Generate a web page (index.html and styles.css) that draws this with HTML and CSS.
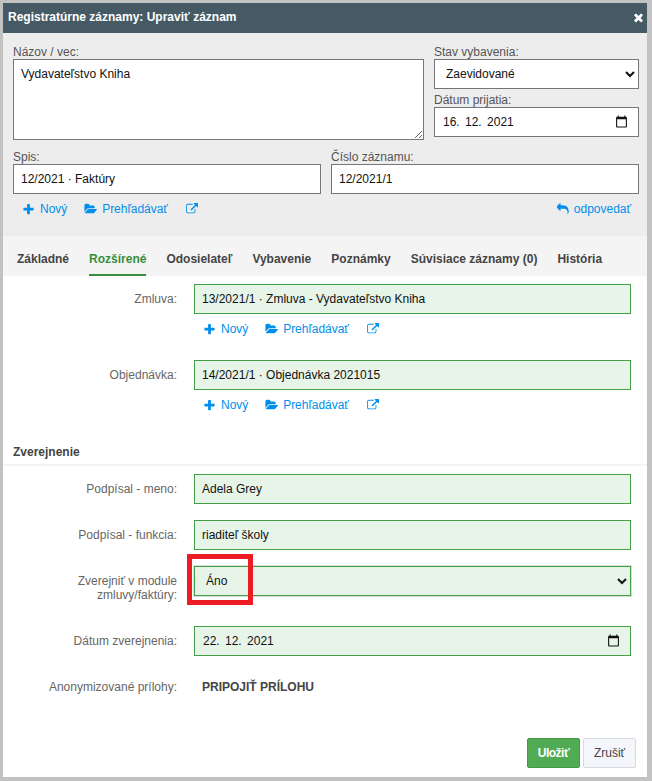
FILE: index.html
```
<!DOCTYPE html>
<html lang="sk">
<head>
<meta charset="utf-8">
<title>Upraviť záznam</title>
<link rel="stylesheet" href="styles.css">
</head>
<body>
<svg width="0" height="0" class="defs">
  <symbol id="times" viewBox="0 0 1792 1792"><path d="M1490 1322q0 40-28 68l-136 136q-28 28-68 28t-68-28l-294-294-294 294q-28 28-68 28t-68-28l-136-136q-28-28-28-68t28-68l294-294-294-294q-28-28-28-68t28-68l136-136q28-28 68-28t68 28l294 294 294-294q28-28 68-28t68 28l136 136q28 28 28 68t-28 68l-294 294 294 294q28 28 28 68z"/></symbol>
  <symbol id="plus" viewBox="192 0 1408 1792"><path d="M1600 736v192q0 40-28 68t-68 28h-416v416q0 40-28 68t-68 28h-192q-40 0-68-28t-28-68v-416h-416q-40 0-68-28t-28-68v-192q0-40 28-68t68-28h416v-416q0-40 28-68t68-28h192q40 0 68 28t28 68v416h416q40 0 68 28t28 68z"/></symbol>
  <symbol id="folder" viewBox="0 0 1943 1792"><path d="M1943 952q0 31-31 66l-336 396q-43 51-120.500 86.500t-143.500 35.500h-1088q-34 0-60.500-13t-26.500-43q0-31 31-66l336-396q43-51 120.500-86.500t143.500-35.500h1088q34 0 60.500 13t26.500 43zm-343-344v160h-832q-94 0-197 47.500t-164 119.500l-337 396-5 6q0-4-.5-12.500t-.5-12.500v-960q0-92 66-158t158-66h320q92 0 158 66t66 158v32h544q92 0 158 66t66 158z"/></symbol>
  <symbol id="external" viewBox="0 0 1792 1792"><path d="M1408 928v320q0 119-84.500 203.500t-203.500 84.500h-832q-119 0-203.500-84.500t-84.500-203.500v-832q0-119 84.500-203.500t203.500-84.500h704q14 0 23 9t9 23v64q0 14-9 23t-23 9h-704q-66 0-113 47t-47 113v832q0 66 47 113t113 47h832q66 0 113-47t47-113v-320q0-14 9-23t23-9h64q14 0 23 9t9 23zm384-864v512q0 26-19 45t-45 19-45-19l-176-176-652 652q-10 10-23 10t-23-10l-114-114q-10-10-10-23t10-23l652-652-176-176q-19-19-19-45t19-45 45-19h512q26 0 45 19t19 45z"/></symbol>
  <symbol id="reply" viewBox="0 0 1792 1792"><path d="M1792 1120q0 166-127 451-3 7-10.500 24t-13.500 30-13 22q-12 17-28 17-15 0-23.500-10t-8.500-25q0-9 2.500-26.500t2.500-23.500q5-68 5-123 0-112-19.500-200.500t-54-153.500-89-112-117.500-77.500-152-46-178-19-211-5.500h-224v256q0 26-19 45t-45 19-45-19l-512-512q-19-19-19-45t19-45l512-512q19-19 45-19t45 19 19 45v256h224q713 0 875 403 53 134 53 333z"/></symbol>
  <symbol id="calendar" viewBox="0 0 24 24"><path d="M20 3h-1V1h-2v2H7V1H5v2H4c-1.100 0-2 .9-2 2v16c0 1.100.9 2 2 2h16c1.100 0 2-.9 2-2V5c0-1.100-.9-2-2-2zm0 18H4V8h16v13z"/></symbol>
</svg>
<div class="dialog">
  <header class="titlebar"><span>Registratúrne záznamy: Upraviť záznam</span><svg class="close"><use href="#times"/></svg></header>
  <section class="summary">
    <div class="columns first">
      <label class="subject"><span>Názov / vec:</span><textarea>Vydavateľstvo Kniha</textarea></label>
      <div class="side">
        <label><span>Stav vybavenia:</span><select><option>Zaevidované</option></select></label>
        <label class="gap"><span>Dátum prijatia:</span><span class="field date"><span>16. 12. 2021</span><svg><use href="#calendar"/></svg></span></label>
      </div>
    </div>
    <div class="columns halves">
      <label><span>Spis:</span><input value="12/2021 · Faktúry"></label>
      <label><span>Číslo záznamu:</span><input value="12/2021/1"></label>
    </div>
    <div class="linkbar">
      <div class="links"><a><svg class="plus"><use href="#plus"/></svg>Nový</a><a><svg class="folder"><use href="#folder"/></svg>Prehľadávať</a><a><svg class="ext"><use href="#external"/></svg></a></div>
      <a class="answer"><svg><use href="#reply"/></svg>odpovedať</a>
    </div>
  </section>
  <nav class="tabs"><a>Základné</a><a class="active">Rozšírené</a><a>Odosielateľ</a><a>Vybavenie</a><a>Poznámky</a><a>Súvisiace záznamy (0)</a><a>História</a></nav>
  <section class="form">
    <div class="row tall"><span class="name">Zmluva:</span><div><input value="13/2021/1 · Zmluva - Vydavateľstvo Kniha">
      <div class="links"><a><svg class="plus"><use href="#plus"/></svg>Nový</a><a><svg class="folder"><use href="#folder"/></svg>Prehľadávať</a><a><svg class="ext"><use href="#external"/></svg></a></div></div></div>
    <div class="row tall"><span class="name">Objednávka:</span><div><input value="14/2021/1 · Objednávka 2021015">
      <div class="links"><a><svg class="plus"><use href="#plus"/></svg>Nový</a><a><svg class="folder"><use href="#folder"/></svg>Prehľadávať</a><a><svg class="ext"><use href="#external"/></svg></a></div></div></div>
    <h2>Zverejnenie</h2>
    <div class="row"><span class="name">Podpísal - meno:</span><input value="Adela Grey"></div>
    <div class="row"><span class="name">Podpísal - funkcia:</span><input value="riaditeľ školy"></div>
    <div class="row publish"><span class="name">Zverejniť v module zmluvy/faktúry:</span><div class="marked"><select><option>Áno</option></select><i class="highlight"></i></div></div>
    <div class="row"><span class="name">Dátum zverejnenia:</span><span class="field date"><span>22. 12. 2021</span><svg><use href="#calendar"/></svg></span></div>
    <div class="row"><span class="name">Anonymizované prílohy:</span><a class="attach">PRIPOJIŤ PRÍLOHU</a></div>
  </section>
  <footer><button class="save">Uložiť</button><button>Zrušiť</button></footer>
</div>
</body>
</html>
```
FILE: styles.css
```
* { box-sizing: border-box; }
body { margin: 0; background: #c2c2c2; font: 12px/14px "Liberation Sans", Arial, sans-serif; color: #444; }
.defs { position: absolute; }
svg { fill: currentColor; flex: none; }
.dialog { display: flex; flex-direction: column; width: 644px; height: 774px; margin: 3px 0 0 3px; background: #fff; overflow: hidden; }
.titlebar { display: flex; justify-content: space-between; align-items: center; height: 30px; padding: 0 2px 2px 5px; background: #465a65; color: #fff; font-weight: bold; }
.close { width: 13px; height: 13px; margin-top: 1px; }

.summary { height: 203px; padding: 12px 8px 0 10px; background: #ededed; }
.columns { display: flex; gap: 10px; }
.columns label > span:first-child { display: block; height: 14px; color: #555; }
.subject { width: 411px; }
.side { width: 205px; }
.gap { display: block; margin-top: 4px; }
.halves { margin-top: 10px; }
.halves label { flex: 1; }

input, select, textarea, .field { display: block; width: 100%; height: 30px; margin: 0; padding: 0 7px 1px; border: 1px solid #767676; border-radius: 0; background: #fff; color: #111; font: inherit; outline: 0; }
textarea { height: 81px; padding-top: 7px; }
.date { display: flex; align-items: center; justify-content: space-between; padding: 0 10px 1px 8px; word-spacing: 2px; }
.date svg { width: 13px; height: 13px; }

.linkbar { display: flex; justify-content: space-between; }
.links { display: flex; height: 14px; margin: 8px 0 0 10px; color: #008fec; letter-spacing: -.04px; }
.links a, .answer { display: flex; align-items: center; }
.links .plus { width: 11px; height: 13px; margin-right: 6px; }
.links .folder { width: 13px; height: 12px; margin: 0 5px 0 17px; }
.links .ext { width: 12px; height: 12px; margin: 0 0 1px 18px; }
.answer { height: 14px; margin: 8px 8px 0 0; color: #008fec; }
.answer svg { width: 12px; height: 12px; margin-right: 5px; }

.tabs { display: flex; gap: 20px; height: 40px; padding-left: 14px; background: #f4f4f4; font-weight: bold; white-space: nowrap; }
.tabs a { height: 40px; padding-top: 16px; }
.tabs .active { color: #388e3c; border-bottom: 2px solid #388e3c; }

.form { padding-top: 8px; }
.row { display: grid; grid-template-columns: 174px 437px; column-gap: 17px; height: 30px; margin-bottom: 16px; }
.tall { height: 60px; }
.publish { height: 44px; }
.name { padding: 8px 0 0 30px; text-align: right; color: #666; }
.form input, .form select, .form .field { background: #e7f4e8; border-color: #43a047; }
h2 { height: 21px; margin: 25px 0 8px; padding: 0 0 0 10px; border-bottom: 2px solid #f4f4f4; font: bold 12px/14px "Liberation Sans", Arial, sans-serif; }
.marked { position: relative; }
.marked select { box-shadow: 0 0 0 1px #d5dfd5; }
.highlight { position: absolute; left: -7px; top: -12px; width: 66px; height: 51px; border: 5px solid #ed1c24; }
.attach { padding: 8px 0 0 8px; font-weight: bold; }

footer { display: flex; justify-content: flex-end; gap: 3px; margin: auto 11px 9px 0; }
button { width: 53px; height: 30px; padding: 0; border: 1px solid #d7dae2; border-radius: 2px; background: #f5f6fb; color: #444; font: inherit; }
.save { background: #50ab54; border-color: #43994a; color: #fff; font-weight: bold; letter-spacing: -.5px; }
```
